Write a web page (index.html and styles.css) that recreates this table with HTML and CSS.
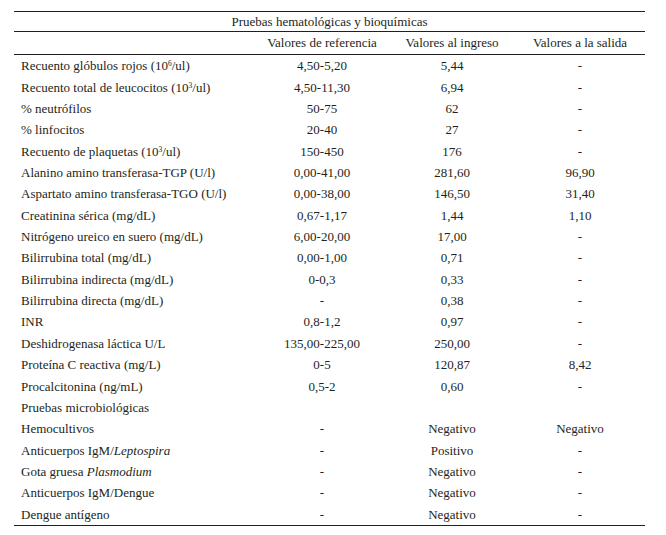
FILE: index.html
```html
<!DOCTYPE html>
<html lang="es">
<head>
<meta charset="utf-8">
<link rel="stylesheet" href="styles.css">
</head>
<body>
<table class="lab">
  <colgroup>
    <col class="c1"><col class="c2"><col class="c3"><col class="c4">
  </colgroup>
  <thead>
    <tr class="title-row"><th colspan="4">Pruebas hematológicas y bioquímicas</th></tr>
    <tr class="head-row"><th></th><th>Valores de referencia</th><th>Valores al ingreso</th><th>Valores a la salida</th></tr>
  </thead>
  <tbody>
    <tr><td>Recuento glóbulos rojos (10<sup>6</sup>/ul)</td><td>4,50-5,20</td><td>5,44</td><td>-</td></tr>
    <tr><td>Recuento total de leucocitos (10<sup>3</sup>/ul)</td><td>4,50-11,30</td><td>6,94</td><td>-</td></tr>
    <tr><td>% neutrófilos</td><td>50-75</td><td>62</td><td>-</td></tr>
    <tr><td>% linfocitos</td><td>20-40</td><td>27</td><td>-</td></tr>
    <tr><td>Recuento de plaquetas (10<sup>3</sup>/ul)</td><td>150-450</td><td>176</td><td>-</td></tr>
    <tr><td>Alanino amino transferasa-TGP (U/l)</td><td>0,00-41,00</td><td>281,60</td><td>96,90</td></tr>
    <tr><td>Aspartato amino transferasa-TGO (U/l)</td><td>0,00-38,00</td><td>146,50</td><td>31,40</td></tr>
    <tr><td>Creatinina sérica (mg/dL)</td><td>0,67-1,17</td><td>1,44</td><td>1,10</td></tr>
    <tr><td>Nitrógeno ureico en suero (mg/dL)</td><td>6,00-20,00</td><td>17,00</td><td>-</td></tr>
    <tr><td>Bilirrubina total (mg/dL)</td><td>0,00-1,00</td><td>0,71</td><td>-</td></tr>
    <tr><td>Bilirrubina indirecta (mg/dL)</td><td>0-0,3</td><td>0,33</td><td>-</td></tr>
    <tr><td>Bilirrubina directa (mg/dL)</td><td>-</td><td>0,38</td><td>-</td></tr>
    <tr><td>INR</td><td>0,8-1,2</td><td>0,97</td><td>-</td></tr>
    <tr><td>Deshidrogenasa láctica U/L</td><td>135,00-225,00</td><td>250,00</td><td>-</td></tr>
    <tr><td>Proteína C reactiva (mg/L)</td><td>0-5</td><td>120,87</td><td>8,42</td></tr>
    <tr><td>Procalcitonina (ng/mL)</td><td>0,5-2</td><td>0,60</td><td>-</td></tr>
    <tr><td>Pruebas microbiológicas</td><td></td><td></td><td></td></tr>
    <tr><td>Hemocultivos</td><td>-</td><td>Negativo</td><td>Negativo</td></tr>
    <tr><td>Anticuerpos IgM/<i>Leptospira</i></td><td>-</td><td>Positivo</td><td>-</td></tr>
    <tr><td>Gota gruesa <i>Plasmodium</i></td><td>-</td><td>Negativo</td><td>-</td></tr>
    <tr><td>Anticuerpos IgM/Dengue</td><td>-</td><td>Negativo</td><td>-</td></tr>
    <tr><td>Dengue antígeno</td><td>-</td><td>Negativo</td><td>-</td></tr>
  </tbody>
</table>
</body>
</html>
```
FILE: styles.css
```css
html, body {
  margin: 0;
  padding: 0;
  background: #ffffff;
}

body {
  padding: 11px 0 0 14px;
  font-family: "Liberation Serif", "Times New Roman", serif;
  font-size: 13px;
  color: #231f20;
}

.lab {
  width: 631px;
  border-collapse: collapse;
  table-layout: fixed;
  border-top: 1px solid #231f20;
  border-bottom: 1px solid #231f20;
}

.c1 { width: 241px; }
.c2 { width: 134px; }
.c3 { width: 126px; }
.c4 { width: 130px; }

.lab th {
  font-weight: normal;
  padding: 0;
  text-align: center;
}

.title-row th {
  height: 19px;
  border-bottom: 1px solid #231f20;
  line-height: 19px;
}

.head-row th {
  height: 22px;
  border-bottom: 1px solid #231f20;
  line-height: 22px;
}

.lab td {
  height: 21.36px;
  padding: 0;
  text-align: center;
  line-height: 21px;
  white-space: nowrap;
}

.lab td:first-child {
  text-align: left;
  padding-left: 7px;
}

.lab sup {
  font-size: 7.5px;
  line-height: 0;
  vertical-align: 4px;
}
```
